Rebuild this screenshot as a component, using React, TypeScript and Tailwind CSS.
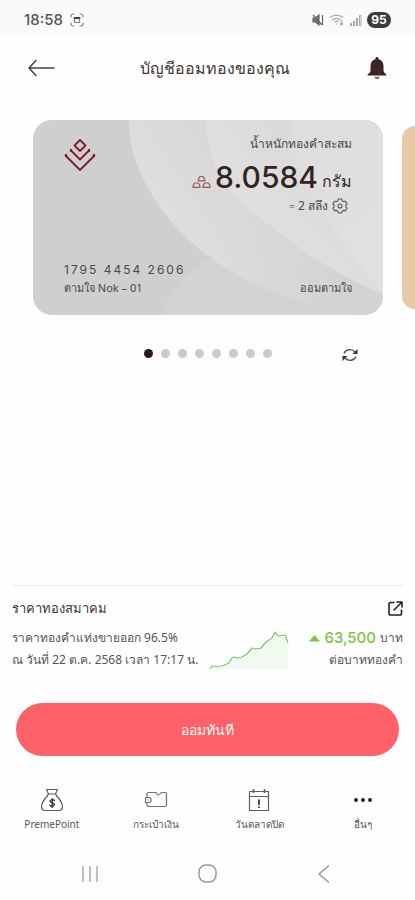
import type { ReactNode } from "react";

interface NavItemProps {
      label: string;
      children: ReactNode;
}

const NavItem: React.FC<NavItemProps> = ({ label, children }) => {
      return (
            <button type="button" className="flex flex-col items-center gap-1">
                  <span className="flex h-6 items-center">{children}</span>
                  <span className="text-[10px] leading-4 text-[#5c5654]">{label}</span>
            </button>
      )
}

const StatusBar = () => {
      return (
            <div className="flex h-[34px] items-center justify-between bg-[#fafafa] px-6 pt-[6px] text-[#555]">
                  <div className="flex items-center gap-[7px]">
                        <span className="font-['Inter',sans-serif] text-[15px] leading-5 font-medium">18:58</span>
                        <svg width="14" height="14" viewBox="0 0 14 14" fill="none" stroke="#888" strokeWidth="1.2" strokeLinecap="round">
                              <path d="M1 4V3a2 2 0 0 1 2-2h1M10 1h1a2 2 0 0 1 2 2v1M13 10v1a2 2 0 0 1-2 2h-1M4 13H3a2 2 0 0 1-2-2v-1" />
                              <path d="M4.500 5.500h5v4h-5z" />
                              <path d="M4.500 5h5" strokeWidth="2" stroke="#444" />
                        </svg>
                  </div>
                  <div className="flex items-center gap-[5px]">
                        {/* Muted */}
                        <svg width="12" height="12" viewBox="0 0 12 12" fill="none" stroke="#666" strokeWidth="1.200">
                              <path d="M1 4h2.500L7 1v10L3.500 8H1z" fill="#777" />
                              <path d="M1 1l9 10M10.500 1v10" />
                        </svg>
                        {/* Wifi */}
                        <svg width="16" height="12" viewBox="0 0 16 12" fill="none" stroke="#aaa" strokeWidth="1.200">
                              <path d="M1 3.500C5 .5 10 .5 14 3.500M3 6c2.500-2 6-2 8.500 0M5.500 8c1.200-1 2.800-1 4 0" />
                              <path d="M12.500 6v5M11 9.500l1.500 1.500L14 9.500M7.500 9.500v1" />
                        </svg>
                        {/* Signal */}
                        <svg width="12" height="12" viewBox="0 0 12 12" fill="#aaa">
                              <path d="M0 9h2v3H0zM3 7h2v5H3zM6 4h2v8H6z" />
                              <path d="M9.500 1.500h1.500v10H9.500z" fill="none" stroke="#aaa" />
                        </svg>
                        <span className="flex h-4 w-6 items-center justify-center rounded-full bg-[#3c3c3c] font-['Inter',sans-serif] text-[12px] leading-4 font-bold text-white">95</span>
                  </div>
            </div>
      )
}

const Header = () => {
      return (
            <header className="grid h-[68px] grid-cols-[auto_1fr_auto] items-center px-7">
                  <button type="button" aria-label="ย้อนกลับ">
                        <svg width="27" height="18" viewBox="0 0 27 18" fill="none" stroke="#4a3f3d" strokeWidth="1.500" strokeLinecap="round" strokeLinejoin="round">
                              <path d="M8 1.500L1 9l7 7.500M1 9h25" />
                        </svg>
                  </button>
                  <h1 className="pl-2 text-center text-[16px] leading-6 text-[#3f3735]">บัญชีออมทองของคุณ</h1>
                  <button type="button" aria-label="การแจ้งเตือน">
                        <svg width="20" height="23" viewBox="0 0 20 23" fill="#3a2523">
                              <path d="M10 0c.9 0 1.500.6 1.500 1.500v.8c3.200.7 5 3.200 5 6.500v4.700c0 1.500 1 2.600 3 4.200v.8H.5v-.8c2-1.600 3-2.700 3-4.200V8.800c0-3.300 1.800-5.800 5-6.500v-.8C8.500.6 9.100 0 10 0z" />
                              <path d="M7.200 19.800h5.600c-.3 1.600-1.400 2.500-2.800 2.500s-2.500-.9-2.800-2.500z" fill="#75706f" />
                        </svg>
                  </button>
            </header>
      )
}

const GoldCard = () => {
      return (
            <article className="relative h-[195px] min-w-0 flex-1 overflow-hidden rounded-[19px] bg-[#cfcfcf] text-[#4d4745]">
                  {/* Petal shapes behind the text */}
                  <svg className="absolute inset-0 h-full w-full" viewBox="0 0 350 195" preserveAspectRatio="none">
                        <defs>
                              <linearGradient id="petalA" gradientUnits="userSpaceOnUse" x1="110" y1="90" x2="200" y2="30">
                                    <stop offset="0" stopColor="#dfdfdf" />
                                    <stop offset="1" stopColor="#d7d7d7" />
                              </linearGradient>
                              <linearGradient id="petalFade" gradientUnits="userSpaceOnUse" x1="190" y1="130" x2="300" y2="190">
                                    <stop offset="0" stopColor="#d8d8d8" stopOpacity="0" />
                                    <stop offset="1" stopColor="#d3d3d3" />
                              </linearGradient>
                              <linearGradient id="petalB" gradientUnits="userSpaceOnUse" x1="190" y1="80" x2="270" y2="10">
                                    <stop offset="0" stopColor="#e0e0e0" />
                                    <stop offset="1" stopColor="#dadada" />
                              </linearGradient>
                              <linearGradient id="petalC" gradientUnits="userSpaceOnUse" x1="260" y1="20" x2="350" y2="160">
                                    <stop offset="0" stopColor="#dedede" />
                                    <stop offset="1" stopColor="#e1e1e1" />
                              </linearGradient>
                        </defs>
                        <path d="M128 195C138 168 158 147 178 138L350 195z" fill="#d3d3d3" />
                        <path d="M96 0C94 50 135 108 178 138C215 166 262 180 305 190L350 195V0z" fill="url(#petalA)" />
                        <path d="M96 0C94 50 135 108 178 138C215 166 262 180 305 190L350 195V0z" fill="url(#petalFade)" />
                        <path d="M173 0C172 50 205 85 238 106C280 140 315 160 350 174V0z" fill="url(#petalB)" />
                        <path d="M258 0C256 30 262 48 280 74C300 110 325 145 350 174V0z" fill="url(#petalC)" />
                  </svg>

                  <div className="relative flex h-full flex-col justify-between pt-3 pr-[31px] pb-[18px] pl-[31px]">
                        <div className="flex items-start justify-between">
                              <svg className="mt-[6px]" width="32" height="34" viewBox="0 0 32 34" fill="none" stroke="#7d1d2b" strokeWidth="1.800" strokeLinejoin="round">
                                    <path d="M16 2l5.500 5.500L16 13l-5.500-5.500z" />
                                    <path d="M7 12.500l9 9 9-9" />
                                    <path d="M1.500 17.500L16 32l14.500-14.500" />
                                    <path d="M7 11v3M25 11v3M2 16v3M30 16v3" strokeWidth="2.200" />
                              </svg>
                              <div className="flex flex-col items-end">
                                    <p className="text-[12px] leading-6">น้ำหนักทองคำสะสม</p>
                                    <p className="flex items-end gap-1 text-[#33241f]">
                                          <svg className="mb-[10px]" width="19" height="13" viewBox="0 0 19 13" fill="none" stroke="#96525c" strokeWidth="1.200" strokeLinejoin="round">
                                                <path d="M6.300 5.800V4.500L8 1.500h3l1.700 3v1.300z" />
                                                <path d="M1 12.300V11l1.500-3h3.800L8 11v1.300zM11 12.300V11l1.700-3h3.800l1.500 3v1.300z" />
                                          </svg>
                                          <span className="font-['Inter',sans-serif] text-[30px] leading-[42px] font-medium">8.0584</span>
                                          <span className="text-[16px] leading-[34px] font-medium">กรัม</span>
                                    </p>
                                    <p className="flex items-center gap-1 pr-1 text-[12px] leading-4">
                                          <span className="text-[8px]">≈</span>
                                          2 สลึง
                                          <svg width="16" height="16" viewBox="0 0 16 16" fill="none" stroke="#5a5452" strokeWidth="1.100" strokeLinejoin="round">
                                                <path d="M6.500 1h3l.7 1.900 1.300.7 2-.3 1.500 2.500L13.800 7.300v1.400l1.200 1.500-1.500 2.500-2-.3-1.300.7-.7 1.900h-3l-.7-1.900-1.300-.7-2 .3L1 10.200l1.200-1.500V7.300L1 5.800l1.500-2.500 2 .3 1.300-.7z" />
                                                <circle cx="8" cy="8" r="2" />
                                          </svg>
                                    </p>
                              </div>
                        </div>
                        <div>
                              <p className="font-['Inter',sans-serif] text-[12px] leading-[18px] tracking-[2px]">1795 4454 2606</p>
                              <div className="flex items-center justify-between text-[11px] leading-[18px]">
                                    <span>ตามใจ Nok – 01</span>
                                    <span>ออมตามใจ</span>
                              </div>
                        </div>
                  </div>
            </article>
      )
}

const dots = [0, 1, 2, 3, 4, 5, 6, 7];

const CardPager = () => {
      return (
            <div className="mt-[29px] grid grid-cols-[1fr_auto_1fr] items-center">
                  <div className="col-start-2 flex gap-2">
                        {dots.map((dot) => (
                              <button key={dot} type="button" aria-label={`บัญชี ${dot + 1}`} className={dot === 0 ? "size-[9px] rounded-full bg-[#2c1a17]" : "size-[9px] rounded-full bg-[#cbcbcb]"} />
                        ))}
                  </div>
                  <button type="button" aria-label="รีเฟรช" className="mt-1 mr-[57px] justify-self-end">
                        <svg width="16" height="14" viewBox="0 0 16 14" fill="none" stroke="#555" strokeWidth="1.400">
                              <path d="M2 5.500C3.500 1.500 9.500 0 13 4M14 8.500C12.500 12.500 6.500 14 3 10" />
                              <path d="M15.500 1v5h-5zM.5 13V8h5z" fill="#333" stroke="none" />
                        </svg>
                  </button>
            </div>
      )
}

const GoldPrice = () => {
      return (
            <section className="mx-3 border-t border-[#ededed] pt-[10px] text-[#5a5452]">
                  <div className="flex items-center justify-between">
                        <h2 className="text-[13px] leading-6 font-medium text-[#3a3331]">ราคาทองสมาคม</h2>
                        <a href="#price" aria-label="ดูราคาทอง">
                              <svg width="15" height="15" viewBox="0 0 15 15" fill="none" stroke="#222" strokeWidth="1.600" strokeLinecap="round" strokeLinejoin="round">
                                    <path d="M6 1.500H2.500a1.500 1.500 0 0 0-1.500 1.500v9.500A1.500 1.500 0 0 0 2.500 14H12a1.500 1.500 0 0 0 1.500-1.500V9M9 1h5v5M14 1L6 9" />
                              </svg>
                        </a>
                  </div>
                  <div className="mt-[7px] flex items-center">
                        <div className="text-[12px] leading-[22px] whitespace-nowrap">
                              <p>ราคาทองคำแท่งขายออก 96.5%</p>
                              <p>ณ วันที่ 22 ต.ค. 2568 เวลา 17:17 น.</p>
                        </div>
                        <svg className="mt-1 ml-auto" width="80" height="40" viewBox="0 0 80 40" fill="none">
                              <path d="M1 38L3 35H13L20 32 25 26H33L38 23 43 17H52L57 11 63 7 66 1 69 5 76 4 79 13V38z" fill="#f1faee" />
                              <path d="M1 38l2-3 5 .5 5-.5 7-3 3-5 2-1 4 1 4-1 5-3 5-6 4 1 5-1 5-6 6-4 3-6 3 4 7-1 1 2 2 6" stroke="#7cc66c" strokeWidth="1.200" strokeLinejoin="round" />
                        </svg>
                        <div className="ml-5 text-right text-[12px] leading-[22px] whitespace-nowrap">
                              <p className="flex items-center justify-end gap-1">
                                    <svg width="11" height="7" viewBox="0 0 11 7" fill="#80c342">
                                          <path d="M5.500 0L11 6.500H0z" />
                                    </svg>
                                    <span className="font-['Inter',sans-serif] text-[15px] font-medium text-[#80c342]">63,500</span>
                                    บาท
                              </p>
                              <p>ต่อบาททองคำ</p>
                        </div>
                  </div>
            </section>
      )
}

const BottomMenu = () => {
      return (
            <nav className="grid h-[92px] grid-cols-4 items-start pt-8">
                  <NavItem label="PremePoint">
                        <svg width="24" height="24" viewBox="0 0 24 24" fill="none" stroke="#625e5c" strokeWidth="1.200" strokeLinejoin="round" strokeLinecap="round">
                              <path d="M6.500 1.500h11l-2 4.500h-7zM8.500 6h7M8.500 6C7.500 9 1.500 12.500 1.500 18.500c0 2.500 1 4 3.500 4h14c2.500 0 3.500-1.500 3.500-4C22.500 12.500 16.500 9 15.500 6" />
                              <path d="M14.500 12.500c-.6-1-4.500-1.300-4.500.8s4.500 1.200 4.500 3.300-4 1.800-4.700.5M12.200 10.500v9" stroke="#222" />
                        </svg>
                  </NavItem>
                  <NavItem label="กระเป๋าเงิน">
                        <svg width="24" height="18" viewBox="0 0 24 18" fill="none" stroke="#75706e" strokeWidth="1.200" strokeLinejoin="round">
                              <path d="M3 6V3.500C3 2 3.500 1.500 5 1.500h6.500c1 0 1.500 2.500 3 2.500s2-2.500 3.500-2.500h3c1 0 1.500.5 1.500 1.500v11c0 1-.5 1.500-1.500 1.500H5c-1.500 0-2-.5-2-1.500V12" />
                              <path d="M1.500 6.500h3c3.500 0 3.500 5 0 5h-3zM4 8.500v1" />
                        </svg>
                  </NavItem>
                  <NavItem label="วันตลาดปิด">
                        <svg width="22" height="24" viewBox="0 0 22 24" fill="none" stroke="#625e5c" strokeWidth="1.200" strokeLinejoin="round">
                              <path d="M1.500 3.500h19v19h-19zM1.500 8.500h19" />
                              <path d="M5.500 1v4M16.500 1v4" strokeWidth="1.600" />
                              <path d="M11 11.500v5.500M11 18.500V20" stroke="#222" strokeWidth="1.600" />
                        </svg>
                  </NavItem>
                  <NavItem label="อื่นๆ">
                        <svg width="18" height="4" viewBox="0 0 18 4" fill="#1f1b1a">
                              <circle cx="2" cy="2" r="1.900" />
                              <circle cx="9" cy="2" r="1.900" />
                              <circle cx="16" cy="2" r="1.900" />
                        </svg>
                  </NavItem>
            </nav>
      )
}

const SystemNav = () => {
      return (
            <div className="flex h-[52px] items-center justify-between bg-[#fdfdfd] px-[81px]">
                  <button type="button" aria-label="แอปล่าสุด">
                        <svg width="18" height="18" viewBox="0 0 18 18" stroke="#aaa" strokeWidth="1.500">
                              <path d="M2 1v16M9 1v16M16 1v16" />
                        </svg>
                  </button>
                  <button type="button" aria-label="หน้าหลัก">
                        <svg width="20" height="20" viewBox="0 0 20 20" fill="none" stroke="#999" strokeWidth="1.500">
                              <rect x="1" y="1" width="17" height="17" rx="7" />
                        </svg>
                  </button>
                  <button type="button" aria-label="กลับ">
                        <svg width="18" height="20" viewBox="0 0 18 20" fill="none" stroke="#999" strokeWidth="1.500">
                              <path d="M13 1.500L3 10l10 8.500" />
                        </svg>
                  </button>
            </div>
      )
}

const App = () => {
      return (
            <div className="flex min-h-screen flex-col bg-[#fefefe] font-['Noto_Sans',sans-serif]">
                  <StatusBar />
                  <Header />
                  <main className="flex flex-1 flex-col">
                        <div className="flex items-center gap-[19px] overflow-hidden pt-[18px] pl-[33px]">
                              <GoldCard />
                              {/* Edge of the next card */}
                              <div className="h-[183px] w-[13px] shrink-0 rounded-l-[13px] bg-[#e9c9a8]" />
                        </div>
                        <CardPager />
                        <div className="mt-auto">
                              <GoldPrice />
                              <div className="px-4 pt-[32px]">
                                    <button type="button" className="h-[53px] w-full rounded-full bg-[#ff6168] text-[14px] font-medium text-white">ออมทันที</button>
                              </div>
                        </div>
                  </main>
                  <BottomMenu />
                  <SystemNav />
            </div>
      )
}

export default App
